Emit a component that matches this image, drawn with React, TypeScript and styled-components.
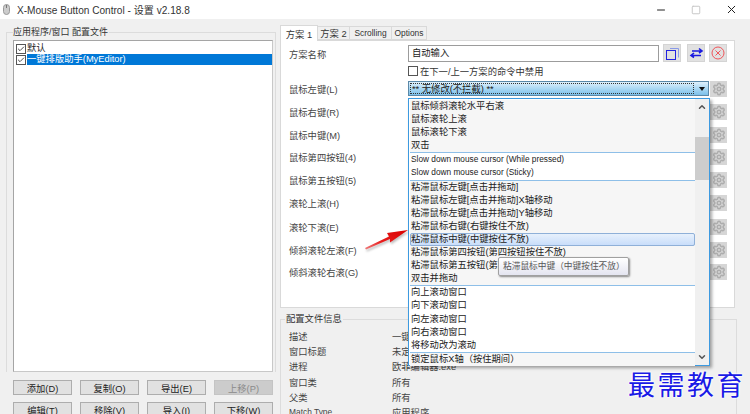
import React from 'react';
import styled, { createGlobalStyle } from 'styled-components';
import { Settings, ChevronUp, ChevronDown, Check, X, Minus, Square } from 'lucide-react';

const FONT = '"Liberation Sans", "Noto Sans CJK SC", sans-serif';

const GlobalStyle = createGlobalStyle`
  html, body {
    margin: 0;
    padding: 0;
    background: #f0f0f0;
  }
  * {
    box-sizing: border-box;
  }
`;

const Window = styled.div`
  position: relative;
  width: 750px;
  height: 414px;
  overflow: hidden;
  background: #f0f0f0;
  font-family: ${FONT};
  font-size: 9.3px;
  color: #222;
`;

const TitleBar = styled.div`
  height: 19px;
  background: #fff;
  display: flex;
  align-items: center;
  padding-left: 3px;
  gap: 7px;
  font-size: 10.1px;
  color: #333;
`;

const TitleText = styled.span`
  flex: 1;
`;

const WinButtons = styled.div`
  display: flex;
  align-items: center;
  gap: 24px;
  padding-right: 12px;
`;

const Body = styled.div`
  display: flex;
  height: 395px;
  padding: 6px 13px 0 6px;
  gap: 4px;
`;

const LeftPane = styled.div`
  width: 270px;
  display: flex;
  flex-direction: column;
`;

const Group = styled.fieldset`
  margin: 1px 0 0;
  padding: 0 1px 0 6px;
  border: 1px solid #dcdcdc;
  border-bottom: none;
  min-width: 0;
`;

const Legend = styled.legend`
  padding: 0 1px 0 0;
  font-size: 9px;
  line-height: 13px;
  color: #333;
`;

const ProfileList = styled.div`
  height: 332px;
  width: 260px;
  margin-top: 1px;
  background: #fff;
  border: 1px solid #a5a5a5;
  border-right-color: #c8c8c8;
  border-bottom-color: #c8c8c8;
`;

const ProfileRow = styled.div<{ $selected?: boolean }>`
  display: flex;
  align-items: center;
  height: 11px;
  margin-top: ${p => (p.$selected ? '0' : '2px')};
  padding-left: 2px;
`;

const ProfileCheck = styled.span`
  width: 10px;
  height: 10px;
  border: 1px solid #555;
  background: #fff;
  display: flex;
  align-items: center;
  justify-content: center;
  margin-right: 1px;
  flex: none;
`;

const ProfileLabel = styled.span<{ $selected?: boolean }>`
  flex: 1;
  line-height: 11px;
  background: ${p => (p.$selected ? '#0078d7' : 'transparent')};
  color: ${p => (p.$selected ? '#fff' : '#222')};
`;

const ButtonGrid = styled.div`
  display: grid;
  grid-template-columns: repeat(4, 59px);
  column-gap: 8px;
  row-gap: 7px;
  margin: 8px 0 0 7px;
`;

const ActionButton = styled.div<{ $disabled?: boolean }>`
  height: 15px;
  display: flex;
  align-items: center;
  justify-content: center;
  border: 1px solid ${p => (p.$disabled ? '#c4c4c4' : '#adadad')};
  background: ${p => (p.$disabled ? '#cccccc' : '#e1e1e1')};
  color: ${p => (p.$disabled ? '#8a8a8a' : '#222')};
`;

const RightPane = styled.div`
  flex: 1;
  display: flex;
  flex-direction: column;
  min-width: 0;
`;

const Tabs = styled.div`
  display: flex;
  align-items: flex-end;
  height: 16px;
`;

const Tab = styled.div<{ $active?: boolean; $width: number; $latin?: boolean }>`
  width: ${p => p.$width}px;
  height: ${p => (p.$active ? 16 : 14)}px;
  margin-bottom: ${p => (p.$active ? -1 : 0)}px;
  display: flex;
  align-items: center;
  justify-content: center;
  background: ${p => (p.$active ? '#fff' : '#f0f0f0')};
  border: 1px solid #d9d9d9;
  border-bottom: ${p => (p.$active ? 'none' : '1px solid #d9d9d9')};
  border-left: ${p => (p.$active ? '1px solid #d9d9d9' : 'none')};
  font-size: ${p => (p.$latin ? 8.4 : 9.3)}px;
  color: #333;
  position: relative;
  z-index: ${p => (p.$active ? 1 : 0)};
`;

const TabPanel = styled.div`
  width: 455px;
  height: 268px;
  flex: none;
  background: #fff;
  border: 1px solid #d9d9d9;
  padding: 3px 7px 0 8px;
`;

const NameRow = styled.div`
  display: flex;
  align-items: center;
  height: 18px;
`;

const FieldLabel = styled.div`
  width: 119px;
  flex: none;
  color: #444;
`;

const NameLabel = styled(FieldLabel)`
  padding-top: 2px;
`;

const NameInput = styled.div`
  width: 252px;
  height: 17px;
  border: 1px solid #9c9c9c;
  padding-left: 3px;
  line-height: 15px;
  color: #222;
  background: #fff;
`;

const IconButton = styled.div<{ $left: number }>`
  width: 18px;
  height: 18px;
  margin-left: ${p => p.$left}px;
  background: #e1e1e1;
  border: 1px solid #d4d4d4;
  display: flex;
  align-items: center;
  justify-content: center;
  flex: none;
`;

const CheckRow = styled.div`
  display: flex;
  align-items: center;
  height: 11px;
  margin: 3px 0 0 119px;
  gap: 2px;
  color: #333;
`;

const EmptyBox = styled.span`
  width: 10px;
  height: 10px;
  border: 1px solid #555;
`;

const ButtonRow = styled.div<{ $gap: number }>`
  display: flex;
  align-items: center;
  height: 16px;
  margin-top: ${p => p.$gap}px;
`;

const ComboSlot = styled.div`
  width: 302px;
  flex: none;
`;

const Combo = styled.div`
  position: relative;
  height: 15px;
  width: 301px;
  margin-top: -2px;
  border: 1px solid #5a88a8;
  background: linear-gradient(#dff0fb, #a6d6f3 55%, #7cc0ea);
  display: flex;
  align-items: center;
  padding-left: 3px;
  color: #222;
`;

const ComboFocus = styled.span`
  position: absolute;
  left: 1px;
  top: 1px;
  bottom: 1px;
  right: 14px;
  border: 1px dotted #333;
`;

const ComboArrow = styled.span`
  position: absolute;
  right: 3px;
  top: 5px;
  border-left: 3.5px solid transparent;
  border-right: 3.5px solid transparent;
  border-top: 4px solid #111;
`;

const GearButton = styled.div`
  width: 17px;
  height: 16px;
  flex: none;
  background: #d6d6d6;
  display: flex;
  align-items: center;
  justify-content: center;
`;

const InfoGroup = styled.fieldset`
  margin: 5px 0 0;
  padding: 2px 0 0 8px;
  width: 457px;
  border: 1px solid #dcdcdc;
  border-bottom: none;
  min-width: 0;
`;

const InfoLegend = styled.legend`
  padding: 0 1px;
  margin-left: -4px;
  line-height: 13px;
  color: #333;
`;

const InfoRow = styled.div`
  display: flex;
  height: 15.3px;
  align-items: center;
  color: #444;
  white-space: nowrap;
`;

const InfoName = styled.span<{ $latin?: boolean }>`
  width: 103px;
  flex: none;
  font-size: ${p => (p.$latin ? 8.4 : 9.3)}px;
`;

/* dropdown list lies over the panel */
const Dropdown = styled.div`
  position: absolute;
  left: 408px;
  top: 98px;
  width: 302px;
  height: 268px;
  background: #fff;
  border: 1px solid #3d9ae0;
  box-shadow: 2px 2px 3px rgba(0, 0, 0, 0.35);
  display: flex;
`;

const Options = styled.div`
  flex: 1;
  min-width: 0;
  padding: 1px 0 0 1px;
`;

const Section = styled.div<{ $plain?: boolean; $last?: boolean }>`
  background: ${p => (p.$plain ? '#fff' : '#f6f6f6')};
  border-bottom: ${p => (p.$last ? 'none' : '1px solid #8ebfe8')};
`;

const Option = styled.div<{ $hover?: boolean; $latin?: boolean }>`
  height: 13.1px;
  line-height: 13px;
  padding-left: 1px;
  font-size: ${p => (p.$latin ? 8.3 : 9.3)}px;
  color: #222;
  white-space: nowrap;
  ${p =>
    p.$hover &&
    `
    background: linear-gradient(#eaf2fc, #c6dcfa);
    outline: 1px solid #8fb0d8;
    outline-offset: -1px;
    border-radius: 2px;
  `}
`;

const Scrollbar = styled.div`
  width: 14px;
  flex: none;
  background: #f0f0f0;
  display: flex;
  flex-direction: column;
  align-items: center;
  justify-content: space-between;
  padding: 3px 0;
  position: relative;
`;

const ScrollThumb = styled.div`
  position: absolute;
  left: 0;
  right: 0;
  top: 38px;
  height: 43px;
  background: #cdcdcd;
`;

const Tooltip = styled.div`
  position: absolute;
  left: 498px;
  top: 257px;
  width: 131px;
  height: 19px;
  border: 1px solid #a0a0a0;
  border-radius: 2px;
  background: linear-gradient(#fff, #e4e5f0);
  box-shadow: 1px 1px 2px rgba(0, 0, 0, 0.45);
  color: #575757;
  font-size: 8.7px;
  line-height: 17px;
  padding-left: 4px;
  white-space: nowrap;
`;

const ArrowMark = styled.svg`
  position: absolute;
  left: 362px;
  top: 226px;
  filter: drop-shadow(1px 2px 1px rgba(0, 0, 0, 0.25));
`;

const Watermark = styled.div`
  position: absolute;
  left: 628px;
  top: 366px;
  font-family: "Noto Sans CJK SC", sans-serif;
  font-size: 27px;
  line-height: 36px;
  letter-spacing: 2.5px;
  color: #1a1ae6;
  white-space: nowrap;
  text-shadow: 0 0 2px #fff, 0 0 2px #fff, 0 0 3px #fff;
`;

const isLatin = (s: string) => /^[\x00-\x7f]+$/.test(s);

const buttonRows = [
  { label: '鼠标左键(L)', gap: 5 },
  { label: '鼠标右键(R)', gap: 7 },
  { label: '鼠标中键(M)', gap: 7 },
  { label: '鼠标第四按钮(4)', gap: 6 },
  { label: '鼠标第五按钮(5)', gap: 7 },
  { label: '滚轮上滚(H)', gap: 7 },
  { label: '滚轮下滚(E)', gap: 8 },
  { label: '倾斜滚轮左滚(F)', gap: 7 },
  { label: '倾斜滚轮右滚(G)', gap: 6 },
];

const infoRows = [
  ['描述', '一键排版助手'],
  ['窗口标题', '未定义'],
  ['进程', '欧菲编辑器.exe'],
  ['窗口类', '所有'],
  ['父类', '所有'],
  ['Match Type', '应用程序'],
];

const sections = [
  { items: ['鼠标倾斜滚轮水平右滚', '鼠标滚轮上滚', '鼠标滚轮下滚', '双击'] },
  { plain: true, items: ['Slow down mouse cursor (While pressed)', 'Slow down mouse cursor (Sticky)'] },
  {
    items: [
      '粘滞鼠标左键[点击并拖动]',
      '粘滞鼠标左键[点击并拖动]X轴移动',
      '粘滞鼠标左键[点击并拖动]Y轴移动',
      '粘滞鼠标右键(右键按住不放)',
      '粘滞鼠标中键(中键按住不放)',
      '粘滞鼠标第四按钮(第四按钮按住不放)',
      '粘滞鼠标第五按钮(第五按钮按住不放)',
      '双击并拖动',
    ],
  },
  { plain: true, items: ['向上滚动窗口', '向下滚动窗口', '向左滚动窗口', '向右滚动窗口', '将移动改为滚动'] },
  { last: true, items: ['锁定鼠标X轴（按住期间）'] },
];

const App: React.FC = () => (
  <Window>
    <GlobalStyle />
    <TitleBar>
      <svg width="7" height="11" viewBox="0 0 7 11">
        <rect x="0.5" y="0.5" width="6" height="10" rx="3" fill="#ccc" stroke="#999" />
        <path d="M3.5 1v3" stroke="#777" />
      </svg>
      <TitleText>X-Mouse Button Control - 设置 v2.18.8</TitleText>
      <WinButtons>
        <Minus size={12} strokeWidth={1} absoluteStrokeWidth color="#222" />
        <Square size={10} strokeWidth={1} absoluteStrokeWidth color="#c8c8c8" />
        <X size={13} strokeWidth={1} absoluteStrokeWidth color="#222" />
      </WinButtons>
    </TitleBar>
    <Body>
      <LeftPane>
        <Group>
          <Legend>应用程序/窗口 配置文件</Legend>
          <ProfileList>
            <ProfileRow>
              <ProfileCheck><Check size={10} strokeWidth={1} absoluteStrokeWidth color="#222" /></ProfileCheck>
              <ProfileLabel>默认</ProfileLabel>
            </ProfileRow>
            <ProfileRow $selected>
              <ProfileCheck><Check size={10} strokeWidth={1} absoluteStrokeWidth color="#222" /></ProfileCheck>
              <ProfileLabel $selected>一键排版助手(MyEditor)</ProfileLabel>
            </ProfileRow>
          </ProfileList>
        </Group>
        <ButtonGrid>
          <ActionButton>添加(D)</ActionButton>
          <ActionButton>复制(O)</ActionButton>
          <ActionButton>导出(E)</ActionButton>
          <ActionButton $disabled>上移(P)</ActionButton>
          <ActionButton>编辑(T)</ActionButton>
          <ActionButton>移除(V)</ActionButton>
          <ActionButton>导入(I)</ActionButton>
          <ActionButton>下移(W)</ActionButton>
        </ButtonGrid>
      </LeftPane>
      <RightPane>
        <Tabs>
          <Tab $active $width={38}>方案 1</Tab>
          <Tab $width={32}>方案 2</Tab>
          <Tab $width={42} $latin>Scrolling</Tab>
          <Tab $width={35} $latin>Options</Tab>
        </Tabs>
        <TabPanel>
          <NameRow>
            <NameLabel>方案名称</NameLabel>
            <NameInput>自动输入</NameInput>
            <IconButton $left={4}>
              <svg width="15" height="15" viewBox="0 0 15 15" fill="none">
                <path d="M5 2.5h8.5v9" stroke="#8a9ae8" />
                <rect x="1.5" y="4.5" width="9" height="9" stroke="#2323e0" />
              </svg>
            </IconButton>
            <IconButton $left={6}>
              <svg width="15" height="12" viewBox="0 0 15 12" fill="none" stroke="#1a1ae0" strokeWidth="1.6">
                <path d="M3 4h9M10 1.5l3 2.5-3 2" />
                <path d="M12 8.5H3M5 6l-3 2.5 3 2" />
              </svg>
            </IconButton>
            <IconButton $left={4}>
              <svg width="14" height="14" viewBox="0 0 14 14" fill="none" stroke="#f0555a" strokeWidth="1">
                <circle cx="7" cy="7" r="6" />
                <path d="M4.5 4.5l5 5M9.5 4.5l-5 5" />
              </svg>
            </IconButton>
          </NameRow>
          <CheckRow>
            <EmptyBox />
            在下一/上一方案的命令中禁用
          </CheckRow>
          {buttonRows.map((row, i) => (
            <ButtonRow key={row.label} $gap={row.gap}>
              <FieldLabel>{row.label}</FieldLabel>
              <ComboSlot>
                {i === 0 && (
                  <Combo>
                    <ComboFocus />
                    ** 无修改(不拦截) **
                    <ComboArrow />
                  </Combo>
                )}
              </ComboSlot>
              <GearButton><Settings size={14} strokeWidth={1.5} absoluteStrokeWidth color="#adadad" /></GearButton>
            </ButtonRow>
          ))}
        </TabPanel>
        <InfoGroup>
          <InfoLegend>配置文件信息</InfoLegend>
          {infoRows.map(([name, value]) => (
            <InfoRow key={name}>
              <InfoName $latin={isLatin(name)}>{name}</InfoName>
              {value}
            </InfoRow>
          ))}
        </InfoGroup>
      </RightPane>
    </Body>

    <ArrowMark width="50" height="28" viewBox="0 0 50 28">
      <defs>
        <linearGradient id="arrowRed" x1="0" y1="1" x2="1" y2="0">
          <stop offset="0" stopColor="#ee8080" />
          <stop offset="0.4" stopColor="#e81c1c" />
          <stop offset="1" stopColor="#d80000" />
        </linearGradient>
      </defs>
      <path d="M3 22L27 10.5L25 7L46 4L28 16.5L28 13L4 23.5Z" fill="url(#arrowRed)" />
    </ArrowMark>

    <Dropdown>
      <Options>
        {sections.map((section, i) => (
          <Section key={i} $plain={section.plain} $last={section.last}>
            {section.items.map(item => (
              <Option key={item} $latin={isLatin(item)} $hover={item === '粘滞鼠标中键(中键按住不放)'}>{item}</Option>
            ))}
          </Section>
        ))}
      </Options>
      <Scrollbar>
        <ChevronUp size={10} strokeWidth={1.5} absoluteStrokeWidth color="#555" />
        <ScrollThumb />
        <ChevronDown size={10} strokeWidth={1.5} absoluteStrokeWidth color="#555" />
      </Scrollbar>
    </Dropdown>

    <Tooltip>粘滞鼠标中键（中键按住不放）</Tooltip>
    <Watermark>最需教育</Watermark>
  </Window>
);

export default App;
